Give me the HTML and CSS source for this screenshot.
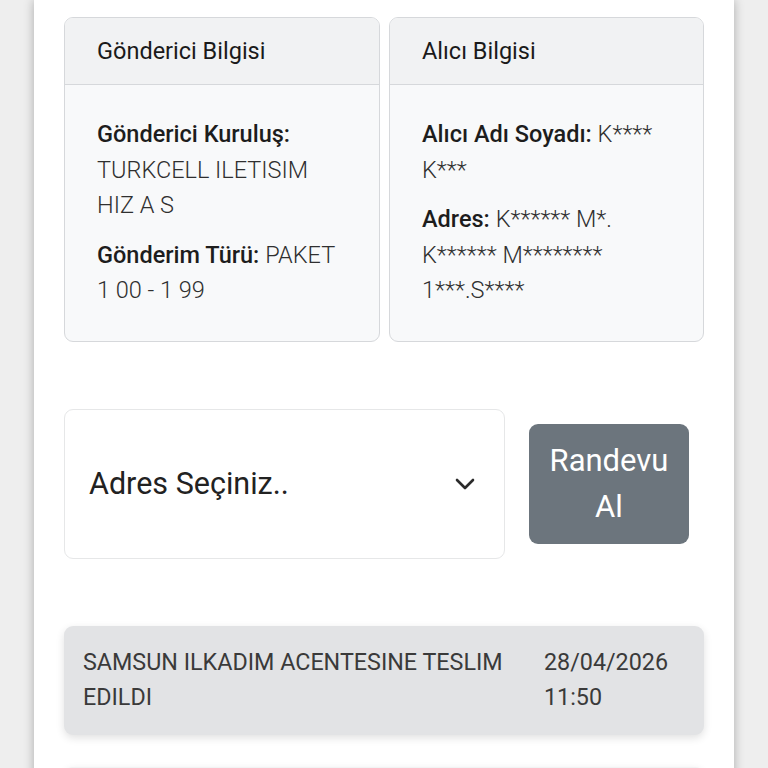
FILE: index.html
```html
<!DOCTYPE html>
<html lang="tr">
<head>
<meta charset="utf-8">
<title>Gönderi Detayı</title>
<link rel="stylesheet" href="styles.css">
</head>
<body>
<main class="panel">
  <section class="cards">
    <div class="card">
      <div class="card-header">Gönderici Bilgisi</div>
      <div class="card-body">
        <p class="field"><span class="label">Gönderici Kuruluş:</span> <span class="value">TURKCELL ILETISIM HIZ A S</span></p>
        <p class="field"><span class="label">Gönderim Türü:</span> <span class="value">PAKET 1 00 - 1 99</span></p>
      </div>
    </div>
    <div class="card">
      <div class="card-header">Alıcı Bilgisi</div>
      <div class="card-body">
        <p class="field"><span class="label">Alıcı Adı Soyadı:</span> <span class="value">K**** K***</span></p>
        <p class="field"><span class="label">Adres:</span> <span class="value">K****** M*. K****** M******** 1***.S****</span></p>
      </div>
    </div>
  </section>

  <section class="appointment">
    <div class="select">
      <span class="select-text">Adres Seçiniz..</span>
      <svg class="chevron" width="22" height="14" viewBox="0 0 22 14"><path d="M3 3 L11 11 L19 3" fill="none" stroke="#2b2b2b" stroke-width="2.6" stroke-linecap="round" stroke-linejoin="round"/></svg>
    </div>
    <button class="btn">Randevu Al</button>
  </section>

  <section class="timeline">
    <div class="event">
      <div class="event-text">SAMSUN ILKADIM ACENTESINE TESLIM EDILDI</div>
      <div class="event-date">28/04/2026 11:50</div>
    </div>
    <div class="event next"></div>
  </section>
</main>
</body>
</html>
```

FILE: styles.css
```css
html, body {
  margin: 0;
  padding: 0;
  height: 768px;
  overflow: hidden;
}
body {
  background: #eeeeee;
  font-family: Roboto, "Noto Sans", "Liberation Sans", sans-serif;
  color: #212529;
}
.panel {
  margin: 0 34px;
  width: 700px;
  min-height: 800px;
  background: #ffffff;
  box-shadow: 0 0 10px rgba(0, 0, 0, 0.28);
  padding: 17px 30px 0;
  box-sizing: border-box;
}
.cards {
  display: grid;
  grid-template-columns: 316px 315px;
  gap: 9px;
}
.card {
  border: 1.5px solid #d6d8db;
  border-radius: 9px;
  background: #f8f9fa;
  overflow: hidden;
}
.card-header {
  height: 67px;
  box-sizing: border-box;
  background: #f1f2f3;
  border-bottom: 1.5px solid #d6d8db;
  padding: 0 0 0 32px;
  display: flex;
  align-items: center;
  font-size: 23.5px;
  font-weight: 400;
  color: #1a1a1a;
}
.card-body {
  padding: 32px 30px 32px 32px;
  display: flex;
  flex-direction: column;
  gap: 14px;
}
.field {
  margin: 0;
  font-size: 23.5px;
  line-height: 35.5px;
}
.label {
  font-weight: 500;
  color: #1d1d1d;
}
.value {
  font-weight: 300;
  color: #2f2f2f;
}
.appointment {
  margin-top: 67px;
  display: flex;
  align-items: center;
  gap: 24px;
}
.select {
  width: 441px;
  height: 150px;
  box-sizing: border-box;
  border: 1.5px solid #e6e7e8;
  border-radius: 9px;
  background: #fff;
  display: flex;
  align-items: center;
  justify-content: space-between;
  padding: 0 28px 0 24px;
}
.select-text {
  font-size: 30.5px;
  font-weight: 400;
  color: #222;
}
.chevron {
  display: block;
}
.btn {
  width: 160px;
  height: 120px;
  border: none;
  border-radius: 9px;
  background: #6c757d;
  color: #ffffff;
  font-family: inherit;
  font-size: 31px;
  font-weight: 400;
  line-height: 46px;
  padding: 0 14px;
  text-align: center;
}
.timeline {
  margin-top: 67px;
  display: flex;
  flex-direction: column;
  gap: 32px;
}
.event {
  background: #e2e3e5;
  border-radius: 9px;
  box-shadow: 0 3px 8px rgba(0, 0, 0, 0.12);
  display: flex;
  padding: 19px 19px 19px 19px;
  font-size: 23.3px;
  line-height: 35.5px;
  color: #3a3a3a;
  font-weight: 400;
}
.event-text {
  width: 461px;
}
.event-date {
  width: 135px;
}
.event.next {
  height: 60px;
  background: #f2f3f4;
  padding: 0;
}
```
